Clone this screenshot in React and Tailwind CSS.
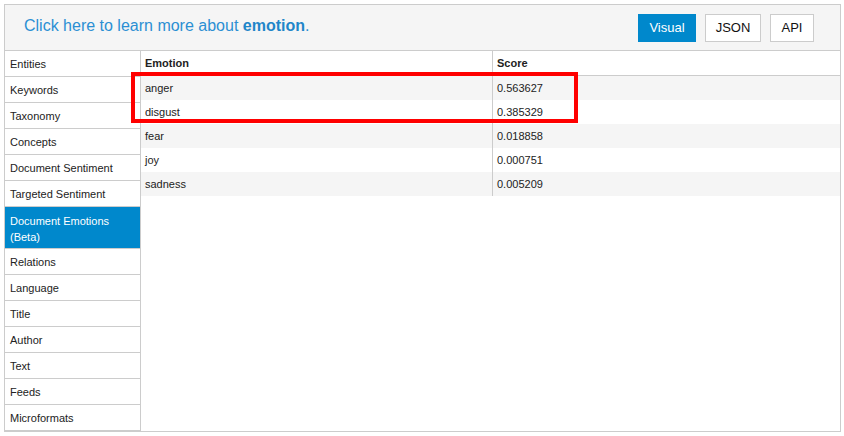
export default function App() {
  const nav = [
    "Entities",
    "Keywords",
    "Taxonomy",
    "Concepts",
    "Document Sentiment",
    "Targeted Sentiment",
    "ACTIVE",
    "Relations",
    "Language",
    "Title",
    "Author",
    "Text",
    "Feeds",
    "Microformats",
  ];
  const rows = [
    ["anger", "0.563627"],
    ["disgust", "0.385329"],
    ["fear", "0.018858"],
    ["joy", "0.000751"],
    ["sadness", "0.005209"],
  ];
  return (
    <div
      className="w-[844px] h-[436px] bg-white pt-[4px] pl-[4px]"
      style={{ fontFamily: '"Liberation Sans", Arial, sans-serif' }}
    >
      <div className="relative w-[837px] h-[428px] border border-[#cccccc] flex flex-col">
        <div className="h-[46px] shrink-0 bg-[#f5f5f5] border-b border-[#cccccc] flex items-center justify-between pl-[19px] pr-[26px]">
          <div className="text-[16px] text-[#2b8fd3] pb-[3px]">
            Click here to learn more about <span className="font-bold text-[#1f86c9]">emotion</span>.
          </div>
          <div className="flex gap-[9px] pt-[1px]">
            <div className="w-[58px] h-[28px] bg-[#0088cc] text-white text-[13px] flex items-center justify-center">
              Visual
            </div>
            <div className="w-[56px] h-[28px] bg-white border border-[#cccccc] text-[#111] text-[13px] flex items-center justify-center">
              JSON
            </div>
            <div className="w-[44px] h-[28px] bg-white border border-[#cccccc] text-[#111] text-[13px] flex items-center justify-center">
              API
            </div>
          </div>
        </div>
        <div className="flex flex-1 min-h-0">
          <div className="w-[136px] shrink-0 border-r border-[#cccccc] flex flex-col">
            {nav.map((n) =>
              n === "ACTIVE" ? (
                <div
                  key={n}
                  className="h-[42px] shrink-0 bg-[#0088cc] text-white text-[11px] leading-[16px] pl-[5px] pt-[6px] border-b border-[#cccccc]"
                >
                  Document Emotions
                  <br />
                  (Beta)
                </div>
              ) : (
                <div
                  key={n}
                  className="h-[26px] shrink-0 text-[#222] text-[11px] pl-[5px] pt-[1px] flex items-center border-b border-[#cccccc]"
                >
                  {n}
                </div>
              )
            )}
          </div>
          <div className="flex-1 flex flex-col">
            <div className="h-[25px] shrink-0 flex border-b border-[#cccccc] text-[11px] font-bold text-[#222]">
              <div className="w-[352px] border-r border-[#cccccc] pl-[4px] flex items-center">Emotion</div>
              <div className="flex-1 pl-[4px] flex items-center">Score</div>
            </div>
            {rows.map(([e, s], i) => (
              <div
                key={e}
                className={`h-[24px] shrink-0 flex text-[11px] text-[#222] ${i % 2 === 0 ? "bg-[#f5f5f5]" : "bg-white"}`}
              >
                <div className="w-[352px] border-r border-[#cccccc] pl-[4px] flex items-center">{e}</div>
                <div className="flex-1 pl-[4px] flex items-center">{s}</div>
              </div>
            ))}
          </div>
        </div>
        <div className="absolute left-[126px] top-[67px] w-[447px] h-[51px] border-[4px] border-[#ff0000] pointer-events-none" />
      </div>
    </div>
  );
}
